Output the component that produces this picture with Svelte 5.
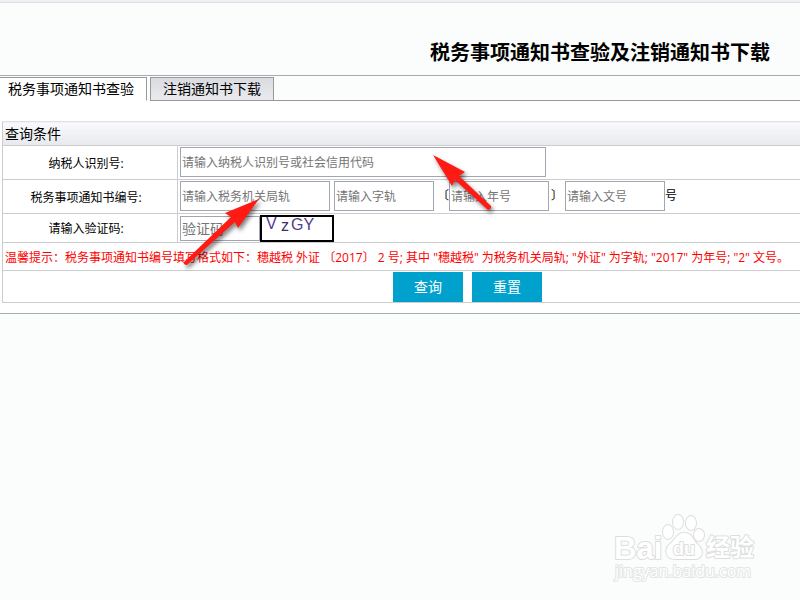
<script>
    let activeTab = $state("check");

    let taxpayerId = $state("");
    let office = $state("");
    let word = $state("");
    let year = $state("");
    let docNo = $state("");
    let code = $state("");

    const tabs = [
        { id: "check", label: "税务事项通知书查验" },
        { id: "download", label: "注销通知书下载" }
    ];

    // Clear every field of the query form
    function resetForm() {
        taxpayerId = "";
        office = "";
        word = "";
        year = "";
        docNo = "";
        code = "";
    }

    function submitForm(e) {
        e.preventDefault();
    }
</script>

<div class="page">
    <header>
        <h1>税务事项通知书查验及注销通知书下载</h1>
    </header>

    <main class="panel">
        <div class="tabs" role="tablist">
            {#each tabs as tab}
                <button
                    type="button"
                    role="tab"
                    class="tab"
                    class:active={activeTab === tab.id}
                    aria-selected={activeTab === tab.id}
                    onclick={() => (activeTab = tab.id)}
                >{tab.label}</button>
            {/each}
            <div class="tab-rest"></div>
        </div>

        <form class="query" onsubmit={submitForm}>
            <table>
                <colgroup>
                    <col class="label-col" />
                    <col />
                </colgroup>
                <tbody>
                    <tr class="head-row">
                        <th colspan="2">查询条件</th>
                    </tr>
                    <tr class="field-row">
                        <th scope="row"><label for="taxpayer">纳税人识别号:</label></th>
                        <td>
                            <div class="fields">
                                <input id="taxpayer" class="long" placeholder="请输入纳税人识别号或社会信用代码" bind:value={taxpayerId} />
                            </div>
                        </td>
                    </tr>
                    <tr class="field-row">
                        <th scope="row"><label for="office">税务事项通知书编号:</label></th>
                        <td>
                            <div class="fields">
                                <input id="office" class="medium" placeholder="请输入税务机关局轨" bind:value={office} />
                                <input class="short word" aria-label="字轨" placeholder="请输入字轨" bind:value={word} />
                                <span class="open">〔</span>
                                <input class="short" aria-label="年号" placeholder="请输入年号" bind:value={year} />
                                <span class="close">〕</span>
                                <input class="short" aria-label="文号" placeholder="请输入文号" bind:value={docNo} />
                                <span>号</span>
                            </div>
                        </td>
                    </tr>
                    <tr class="code-row">
                        <th scope="row"><label for="code">请输入验证码:</label></th>
                        <td>
                            <div class="fields">
                                <input id="code" class="code" placeholder="验证码" bind:value={code} />
                                <svg class="captcha" width="74" height="27" viewBox="0 0 74 27" role="img" aria-label="验证码">
                                    <rect x="1" y="1" width="72" height="25" fill="#fff" stroke="#000" stroke-width="2" />
                                    <text x="6" y="14" fill="#5a35a0">V</text>
                                    <text x="21" y="16" fill="#40306e">z</text>
                                    <text x="31" y="15" fill="#50408c">GY</text>
                                </svg>
                            </div>
                        </td>
                    </tr>
                    <tr class="tip-row">
                        <td colspan="2">温馨提示：税务事项通知书编号填写格式如下：穗越税 外证 〔2017〕 2 号; 其中 "穗越税" 为税务机关局轨; "外证" 为字轨; "2017" 为年号; "2" 文号。</td>
                    </tr>
                    <tr class="action-row">
                        <td colspan="2">
                            <div class="actions">
                                <button type="submit">查询</button>
                                <button type="button" onclick={resetForm}>重置</button>
                            </div>
                        </td>
                    </tr>
                </tbody>
            </table>
        </form>
    </main>

    <!-- Red pointers over the form -->
    <svg class="arrows" width="800" height="320" viewBox="0 0 800 320" aria-hidden="true">
        <g fill="#ff1a14">
            <path d="M433 155 L465 172 L459 176 L491 206 Q492 209 488 210 L455 180 L452 186 Z" />
            <path d="M259 199 L238 228 L235 222 L187 265 Q183 265 184 262 L231 217 L225 213 Z" />
        </g>
    </svg>

    <svg class="watermark" width="150" height="76" viewBox="0 0 150 76" role="img" aria-label="Baidu 经验">
        <g fill="#fff" stroke="#dcdede" stroke-width="2" stroke-linejoin="round" paint-order="stroke">
            <text class="brand" x="3" y="49" font-size="31">Bai</text>
            <ellipse cx="57" cy="22" rx="5" ry="7" />
            <ellipse cx="67" cy="12" rx="5" ry="7" />
            <ellipse cx="80" cy="13" rx="5" ry="7" />
            <ellipse cx="88" cy="25" rx="5" ry="6" />
            <path d="M73 23 C82 23 82 31 87 35 C94 41 91 50 82 49 L64 49 C54 49 53 39 59 34 C65 30 65 23 73 23 Z" />
            <text class="brand" x="62" y="45" font-size="18">du</text>
            <text class="cjk" x="95" y="46" font-size="24">经验</text>
            <text class="site" x="4" y="67" font-size="16">jingyan.baidu.com</text>
        </g>
    </svg>
</div>

<style>
    :global(body) {
        margin: 0;
        background: #fbfdfc;
    }

    .page {
        position: relative;
        min-height: 100vh;
        overflow: hidden;
        box-sizing: border-box;
        border-top: 2px solid #f0f0f4;
        font-family: "Open Sans", "Noto Sans CJK SC", sans-serif;
        font-size: 12px;
        color: #000;
    }

    header {
        border-top: 1px solid #dcdce2;
        padding: 34px 30px 8px;
        text-align: right;
    }

    h1 {
        margin: 0;
        font-family: "Noto Sans CJK SC", sans-serif;
        font-size: 20px;
        line-height: 30px;
        font-weight: bold;
    }

    .panel {
        border-top: 1px solid #a9a9b4;
        border-bottom: 1px solid #a4acb4;
        padding-bottom: 10px;
        background: linear-gradient(#fbfdfc 25px, #fff 25px);
    }

    .tabs {
        display: flex;
        padding-top: 1px;
    }

    .tab {
        box-sizing: border-box;
        height: 24px;
        margin: 0 0 0 3px;
        padding: 0 12px 2px;
        border: 1px solid #999;
        background: linear-gradient(#dadbe0, #eaebef);
        font-family: "Noto Sans CJK SC", sans-serif;
        font-size: 14px;
        line-height: 20px;
        color: #000;
    }

    .tab:first-child {
        margin-left: 0;
        padding-left: 8px;
        border-left: 0;
    }

    .tab.active {
        border-bottom-color: #fff;
        background: #fff;
    }

    .tab-rest {
        flex: 1;
        border-bottom: 1px solid #999;
    }

    .query {
        padding: 20px 0 0 2px;
    }

    table {
        width: 100%;
        table-layout: fixed;
        border-collapse: collapse;
    }

    .label-col {
        width: 175px;
    }

    th,
    td {
        padding: 0;
        border: 1px solid #ccc;
        border-right: 0;
        font-weight: normal;
        line-height: 18px;
    }

    th[scope="row"] {
        padding: 2px 8px 0 0;
    }

    .head-row {
        height: 24px;
    }

    .head-row th {
        padding-left: 2px;
        border-top-color: #dfe0e6;
        background: linear-gradient(#f9fafc, #e8e9ee);
        font-size: 14px;
        text-align: left;
    }

    .field-row {
        height: 34px;
    }

    .code-row {
        height: 29px;
    }

    .field-row td,
    .code-row td {
        padding-top: 1px;
        vertical-align: top;
    }

    .fields {
        display: flex;
        align-items: center;
        padding-left: 2px;
    }

    input {
        box-sizing: border-box;
        height: 30px;
        margin: 0;
        padding: 0 1px;
        border: 1px solid #a2a6b2;
        border-radius: 0;
        background: #fff;
        font-family: inherit;
        font-size: 12px;
    }

    input::placeholder {
        color: #757575;
        opacity: 1;
    }

    .long {
        width: 366px;
    }

    .medium {
        width: 150px;
    }

    .short {
        width: 100px;
    }

    .word {
        margin-left: 4px;
    }

    .open {
        margin-left: 3px;
    }

    .close {
        margin: 0 2px;
    }

    .code {
        width: 80px;
        height: 25px;
        font-size: 14px;
    }

    .captcha {
        display: block;
        font-family: "Liberation Sans", sans-serif;
        font-size: 16px;
    }

    .tip-row {
        height: 28px;
    }

    .tip-row td {
        padding: 2px 0 0 2px;
        color: #f00;
        white-space: nowrap;
    }

    .action-row {
        height: 32px;
    }

    .actions {
        display: flex;
        justify-content: center;
        gap: 9px;
        padding-left: 132px;
    }

    .actions button {
        width: 70px;
        height: 30px;
        padding: 0 0 2px;
        border: 0;
        background: #00a2cd;
        color: #fff;
        font-family: inherit;
        font-size: 14px;
    }

    .arrows {
        position: absolute;
        top: -2px;
        left: 0;
        pointer-events: none;
        filter: drop-shadow(2px 3px 2px rgba(0, 0, 0, 0.5));
    }

    .watermark {
        position: absolute;
        right: 39px;
        bottom: 14px;
    }

    .brand {
        font-family: "Liberation Sans", sans-serif;
        font-weight: bold;
    }

    .cjk {
        font-family: "Noto Sans CJK SC", sans-serif;
        font-weight: bold;
    }

    .site {
        font-family: "Open Sans", sans-serif;
        stroke: #e2e4e4;
    }
</style>
